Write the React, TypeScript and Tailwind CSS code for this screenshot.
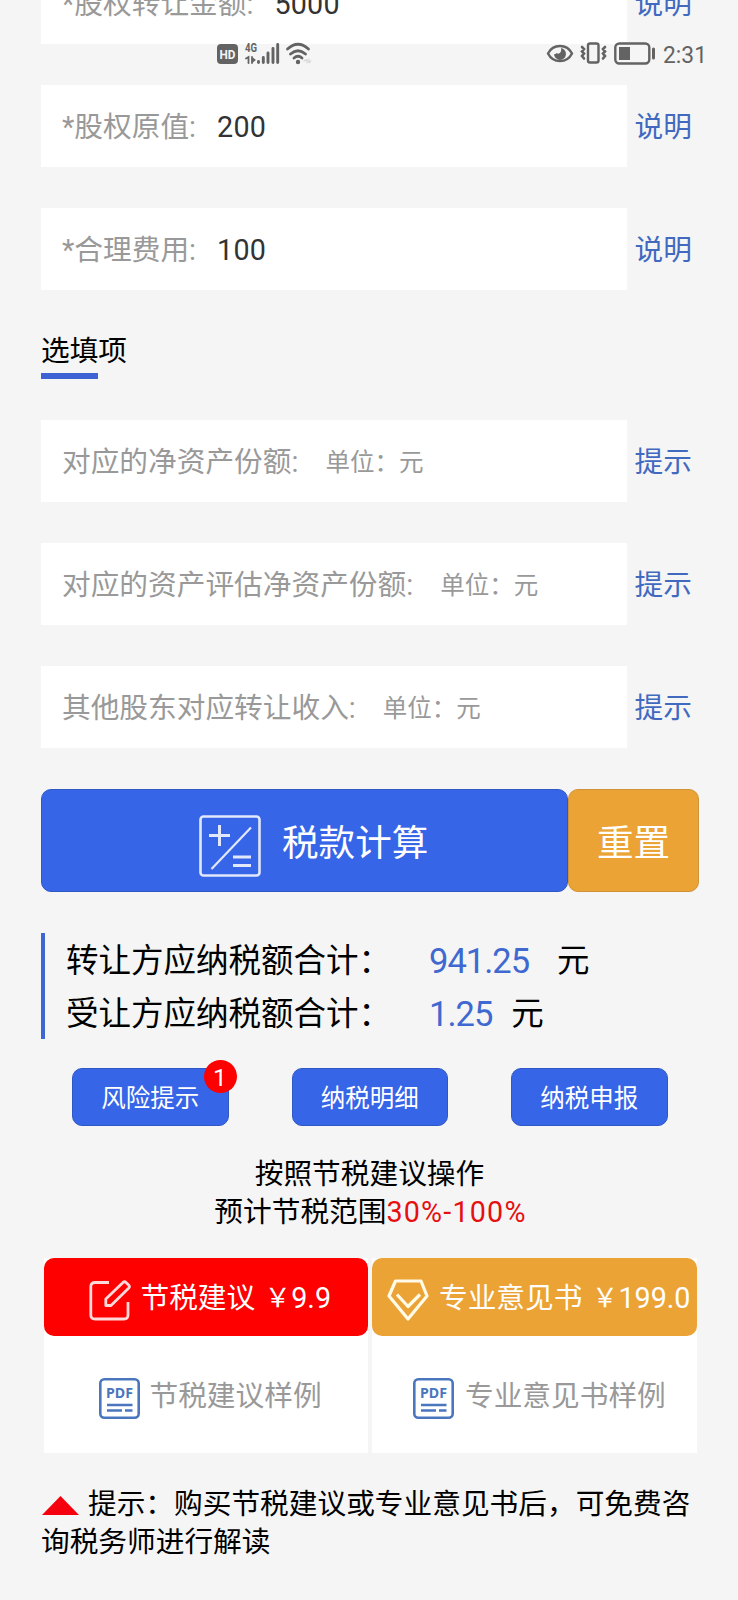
import type { ReactNode } from "react"

type FieldProps = {
  label: string
  value?: string
  action: string
}

const REQUIRED_FIELDS: FieldProps[] = [
  { label: "*股权转让金额:", value: "5000", action: "说明" },
  { label: "*股权原值:", value: "200", action: "说明" },
  { label: "*合理费用:", value: "100", action: "说明" },
]

const OPTIONAL_FIELDS: FieldProps[] = [
  { label: "对应的净资产份额:", action: "提示" },
  { label: "对应的资产评估净资产份额:", action: "提示" },
  { label: "其他股东对应转让收入:", action: "提示" },
]

export default function App() {
  return (
    <div className="relative h-[1600px] w-[738px] overflow-hidden bg-[#f5f5f5] font-['Roboto','Noto_Sans_CJK_SC',sans-serif] text-[28.7px] text-black">
      <StatusBar />

      <main className="-mt-[38px] flex flex-col pl-[41px]">
        <div className="flex flex-col gap-[41px]">
          {REQUIRED_FIELDS.map((field) => (
            <Field key={field.label} {...field} />
          ))}
        </div>

        <div className="mt-[40px] h-[90px]">
          <h2 className="h-[43px] leading-[43px]">选填项</h2>
          <div className="h-[6px] w-[57px] bg-[#3b63d3]" />
        </div>

        <div className="flex flex-col gap-[41px]">
          {OPTIONAL_FIELDS.map((field) => (
            <Field key={field.label} {...field} />
          ))}
        </div>

        <div className="mt-[41px] flex h-[103px] text-[36.6px] text-white">
          <button className="flex w-[527px] items-center rounded-[10px] border border-[#3058c4] bg-[#3665e8] pl-[157px]">
            <CalcIcon />
            <span className="ml-[21px] pt-[7px]">税款计算</span>
          </button>
          <button className="w-[131px] rounded-[10px] border border-[#cf9238] bg-[#eca336] pt-[7px]">
            重置
          </button>
        </div>

        <div className="mt-[41px] h-[106px] border-l-4 border-[#3d68cf] pl-[21px] pt-[2px] text-[32.5px]">
          <ResultLine label="转让方应纳税额合计：" value="941.25" unitGap="ml-[28px]" />
          <ResultLine label="受让方应纳税额合计：" value="1.25" unitGap="ml-[19px]" />
        </div>

        <div className="mt-[29px] flex gap-[63px] pl-[31px]">
          <SmallButton badge="1">风险提示</SmallButton>
          <SmallButton>纳税明细</SmallButton>
          <SmallButton>纳税申报</SmallButton>
        </div>

        <div className="mt-[29px] w-[657px] text-center leading-[38px]">
          <p>按照节税建议操作</p>
          <p className="pl-[2px]">
            预计节税范围
            <span className="tracking-[1.2px] text-[#e60f0f]">30%-100%</span>
          </p>
        </div>

        <div className="mt-[27px] flex gap-[4px] pl-[2.5px]">
          <div className="w-[324.5px] bg-white">
            <button className="flex h-[78px] w-full items-center rounded-[10px] bg-[#fe0000] pl-[45px] text-white">
              <EditIcon />
              <span className="ml-[10px] pt-[4px]">节税建议</span>
              <Price>9.9</Price>
            </button>
            <div className="flex h-[117px] items-center pl-[55px] text-[#999]">
              <PdfIcon />
              <span className="ml-[10px] pt-[4px]">节税建议样例</span>
            </div>
          </div>
          <div className="w-[324.5px] bg-white">
            <button className="flex h-[78px] w-full items-center whitespace-nowrap rounded-[10px] bg-[#eca336] pl-[15px] text-white">
              <DiamondIcon />
              <span className="ml-[10px] pt-[4px]">专业意见书</span>
              <Price>199.0</Price>
            </button>
            <div className="flex h-[117px] items-center pl-[41px] text-[#999]">
              <PdfIcon />
              <span className="ml-[11px] pt-[4px]">专业意见书样例</span>
            </div>
          </div>
        </div>

        <p className="mt-[32px] w-[670px] leading-[38px]">
          <svg className="ml-[1px] mr-[9px] inline-block align-[-1px]" width="37" height="19" viewBox="0 0 37 19">
            <path d="M18.500 0 37 19H0Z" fill="#f6000f" />
          </svg>
          提示：购买节税建议或专业意见书后，可免费咨
          <br />
          询税务师进行解读
        </p>
      </main>
    </div>
  )
}

function Field({ label, value, action }: FieldProps) {
  return (
    <div className="flex h-[82px] items-center">
      <div className="flex h-full w-[586px] items-center whitespace-nowrap bg-white pl-[21px] pt-[4px]">
        <span className="text-[#999]">{label}</span>
        {value ? (
          <span className="ml-[21px] tracking-[0.2px] text-[#333]">{value}</span>
        ) : (
          <span className="ml-[27px] text-[24.5px] text-[#999]">单位：元</span>
        )}
      </div>
      <a className="ml-[7.5px] pt-[4px] text-[#4169c0]">{action}</a>
    </div>
  )
}

type ResultLineProps = {
  label: string
  value: string
  unitGap: string
}

function ResultLine({ label, value, unitGap }: ResultLineProps) {
  return (
    <div className="flex h-[53px] items-center whitespace-nowrap">
      <span className="w-[363px]">{label}</span>
      <span className="text-[34.5px] tracking-[-1px] text-[#3f69d0]">{value}</span>
      <span className={unitGap}>元</span>
    </div>
  )
}

function SmallButton({ children, badge }: { children: ReactNode; badge?: string }) {
  return (
    <button className="relative h-[58px] w-[156.5px] rounded-[10px] border border-[#3058c4] bg-[#3665e8] pt-[5px] text-[24.5px] text-white">
      {children}
      {badge && (
        <span className="absolute -right-[9px] -top-[9px] size-[33px] rounded-full bg-[#fe0000] text-center leading-[35px]">
          {badge}
        </span>
      )}
    </button>
  )
}

function Price({ children }: { children: ReactNode }) {
  return (
    <span className="ml-[9px] flex items-center pt-[4px]">
      <span className="w-[27px] text-center text-[26px]">￥</span>
      {children}
    </span>
  )
}

function StatusBar() {
  return (
    <div className="absolute left-0 top-[36px] flex h-[36px] w-full">
      <svg width="738" height="36" viewBox="0 0 738 36" fill="none" stroke="#636363" strokeLinecap="round">
        <rect x="217" y="8" width="21" height="20" rx="4" fill="#636363" stroke="none" />
        <text x="227.5" y="22.7" fontSize="13" fontWeight="700" fill="#f5f5f5" stroke="none" textAnchor="middle" textLength="16" lengthAdjust="spacingAndGlyphs">HD</text>
        <text x="245" y="16" fontSize="13" fontWeight="700" fill="#636363" stroke="none" textLength="12" lengthAdjust="spacingAndGlyphs">4G</text>
        <path d="M246 22.500 248.500 21V27M252 21V27M252 22 254.500 24 252 26" strokeWidth="1.800" />
        <path d="M258.500 25.500V26.500M263.300 21.500V26.500M268 17V26.500M273 12.500V26.500M277.700 8.500V26.500" strokeWidth="2.900" />
        <path d="M287.500 13Q298 3.500 308.500 13M290.500 18Q298 11.500 305.500 18M294 22Q298 18.500 302 22" strokeWidth="2.800" />
        <circle cx="298" cy="26" r="2.200" fill="#636363" stroke="none" />
        <path d="M304 25 307 23.500V27M309 23V27L311 25" stroke="#ccc" strokeWidth="1" />
        <path d="M548 17.500C553 7.500 567 7.500 572 17.500C567 27.500 553 27.500 548 17.500Z" strokeWidth="2.400" />
        <path d="M561 12A6 6 0 1 1 554 18C555 18.500 556 18 556.500 17C559 19 562 16 561 12Z" fill="#636363" stroke="none" />
        <rect x="588" y="7.500" width="10.500" height="19" rx="2" strokeWidth="2.400" />
        <path d="M582 11 584 13 582 15.500 584 17.500 582 20 584 22.500M605 11 603 13 605 15.500 603 17.500 605 20 603 22.500" strokeWidth="2.600" />
        <rect x="615.300" y="7.500" width="34" height="20" rx="4" strokeWidth="2.400" />
        <rect x="619" y="11" width="11" height="13" fill="#636363" stroke="none" />
        <path d="M653.500 13V22" strokeWidth="3" />
        <text x="663" y="26.800" fontSize="24.500" fill="#636363" stroke="none" textLength="44" lengthAdjust="spacingAndGlyphs">2:31</text>
      </svg>
    </div>
  )
}

function CalcIcon() {
  return (
    <svg className="mt-[11px]" width="62" height="62" viewBox="0 0 62 62" fill="none" stroke="#fff" strokeOpacity=".85" strokeWidth="2.600">
      <rect x="1.500" y="1.500" width="59" height="59" rx="3" />
      <path d="M10 20.500H31M20.500 10V31" strokeWidth="3" />
      <path d="M12.500 54 52 12.500" strokeWidth="2.200" />
      <path d="M34 42H52M34 50.500H52" strokeWidth="3" />
    </svg>
  )
}

function EditIcon() {
  return (
    <svg className="mt-[6px]" width="42" height="41" viewBox="0 0 42 41" fill="none" stroke="#fff" strokeOpacity=".85" strokeWidth="2.800" strokeLinejoin="round">
      <path d="M20 2.500H6Q1.800 2.500 1.800 6.500V35Q1.800 39 6 39H35Q39 39 39 35V22" />
      <path d="M16.800 19 34 2.500Q35.500 1 37 2.500L39.800 5.200Q41 6.600 39.800 8L22 25.500H16.800Z" />
    </svg>
  )
}

function DiamondIcon() {
  return (
    <svg className="mt-[6px]" width="42" height="42" viewBox="0 0 42 42" fill="none" stroke="#fffbe8" strokeWidth="3.200" strokeLinejoin="round">
      <path d="M8.500 2H34L40 17 21 40 2 17Z" />
      <path d="M10 15.500 21 27.500 33 15.500" />
    </svg>
  )
}

function PdfIcon() {
  return (
    <svg className="mt-[7px]" width="41" height="41" viewBox="0 0 41 41" fill="none" stroke="#4a76bd" strokeWidth="2.600">
      <rect x="1.300" y="1.300" width="38.400" height="38.400" rx="4" />
      <text x="20.500" y="20.300" fontSize="14" fontWeight="700" fill="#4a76bd" stroke="none" textAnchor="middle" textLength="27" lengthAdjust="spacingAndGlyphs" className="font-['Noto_Sans']">PDF</text>
      <path d="M8 27H33.500M8 32.500H23M26 32.500H33.500" />
    </svg>
  )
}
